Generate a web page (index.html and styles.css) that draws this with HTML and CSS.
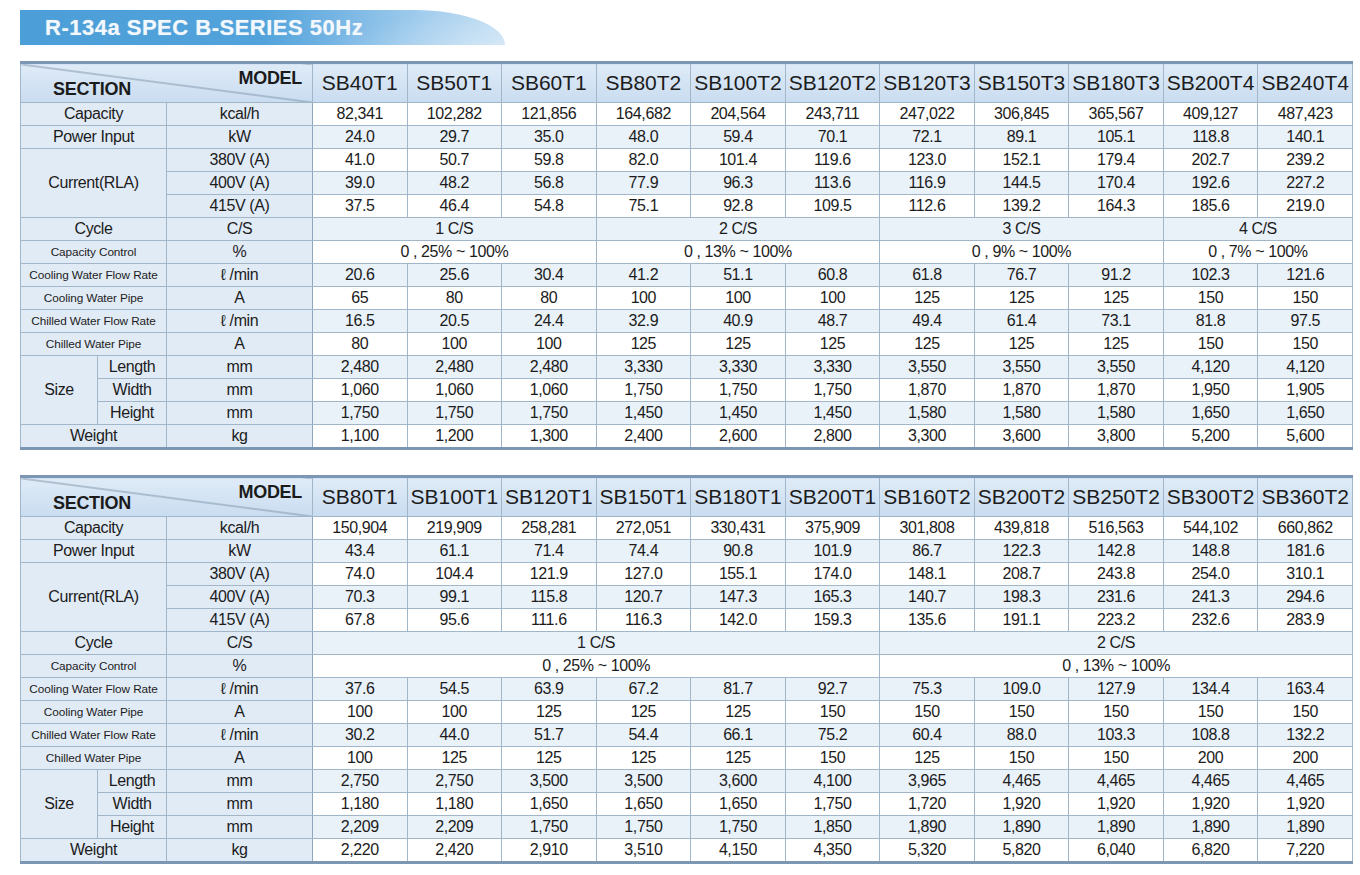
FILE: index.html
```html
<!DOCTYPE html>
<html lang="en">
<head>
<meta charset="utf-8">
<title>R-134a SPEC B-SERIES 50Hz</title>
<link rel="stylesheet" href="styles.css">
</head>
<body>
<div class="banner"><span class="banner-text">R-134a SPEC B-SERIES 50Hz</span></div>

<table class="spec">
  <colgroup><col class="c-a"><col class="c-b"><col class="c-unit"><col span="11" class="c-m"></colgroup>
  <thead>
    <tr>
      <th colspan="3" class="corner"><div class="corner-in"><span class="sec">SECTION</span><span class="mod">MODEL</span></div></th>
      <th>SB40T1</th><th>SB50T1</th><th>SB60T1</th><th>SB80T2</th><th>SB100T2</th><th>SB120T2</th><th>SB120T3</th><th>SB150T3</th><th>SB180T3</th><th>SB200T4</th><th>SB240T4</th>
    </tr>
  </thead>
  <tbody>
    <tr><th colspan="2">Capacity</th><td class="u">kcal/h</td><td>82,341</td><td>102,282</td><td>121,856</td><td>164,682</td><td>204,564</td><td>243,711</td><td>247,022</td><td>306,845</td><td>365,567</td><td>409,127</td><td>487,423</td></tr>
    <tr class="alt"><th colspan="2">Power Input</th><td class="u">kW</td><td>24.0</td><td>29.7</td><td>35.0</td><td>48.0</td><td>59.4</td><td>70.1</td><td>72.1</td><td>89.1</td><td>105.1</td><td>118.8</td><td>140.1</td></tr>
    <tr><th colspan="2" rowspan="3">Current(RLA)</th><td class="u">380V (A)</td><td>41.0</td><td>50.7</td><td>59.8</td><td>82.0</td><td>101.4</td><td>119.6</td><td>123.0</td><td>152.1</td><td>179.4</td><td>202.7</td><td>239.2</td></tr>
    <tr class="alt"><td class="u">400V (A)</td><td>39.0</td><td>48.2</td><td>56.8</td><td>77.9</td><td>96.3</td><td>113.6</td><td>116.9</td><td>144.5</td><td>170.4</td><td>192.6</td><td>227.2</td></tr>
    <tr><td class="u">415V (A)</td><td>37.5</td><td>46.4</td><td>54.8</td><td>75.1</td><td>92.8</td><td>109.5</td><td>112.6</td><td>139.2</td><td>164.3</td><td>185.6</td><td>219.0</td></tr>
    <tr class="alt"><th colspan="2">Cycle</th><td class="u">C/S</td><td colspan="3">1 C/S</td><td colspan="3">2 C/S</td><td colspan="3">3 C/S</td><td colspan="2">4 C/S</td></tr>
    <tr><th colspan="2" class="sm">Capacity Control</th><td class="u">%</td><td colspan="3">0 , 25% ~ 100%</td><td colspan="3">0 , 13% ~ 100%</td><td colspan="3">0 , 9% ~ 100%</td><td colspan="2">0 , 7% ~ 100%</td></tr>
    <tr class="alt"><th colspan="2" class="sm">Cooling Water Flow Rate</th><td class="u">ℓ /min</td><td>20.6</td><td>25.6</td><td>30.4</td><td>41.2</td><td>51.1</td><td>60.8</td><td>61.8</td><td>76.7</td><td>91.2</td><td>102.3</td><td>121.6</td></tr>
    <tr><th colspan="2" class="sm">Cooling Water Pipe</th><td class="u">A</td><td>65</td><td>80</td><td>80</td><td>100</td><td>100</td><td>100</td><td>125</td><td>125</td><td>125</td><td>150</td><td>150</td></tr>
    <tr class="alt"><th colspan="2" class="sm">Chilled Water Flow Rate</th><td class="u">ℓ /min</td><td>16.5</td><td>20.5</td><td>24.4</td><td>32.9</td><td>40.9</td><td>48.7</td><td>49.4</td><td>61.4</td><td>73.1</td><td>81.8</td><td>97.5</td></tr>
    <tr><th colspan="2" class="sm">Chilled Water Pipe</th><td class="u">A</td><td>80</td><td>100</td><td>100</td><td>125</td><td>125</td><td>125</td><td>125</td><td>125</td><td>125</td><td>150</td><td>150</td></tr>
    <tr class="alt"><th rowspan="3">Size</th><th>Length</th><td class="u">mm</td><td>2,480</td><td>2,480</td><td>2,480</td><td>3,330</td><td>3,330</td><td>3,330</td><td>3,550</td><td>3,550</td><td>3,550</td><td>4,120</td><td>4,120</td></tr>
    <tr><th>Width</th><td class="u">mm</td><td>1,060</td><td>1,060</td><td>1,060</td><td>1,750</td><td>1,750</td><td>1,750</td><td>1,870</td><td>1,870</td><td>1,870</td><td>1,950</td><td>1,905</td></tr>
    <tr class="alt"><th>Height</th><td class="u">mm</td><td>1,750</td><td>1,750</td><td>1,750</td><td>1,450</td><td>1,450</td><td>1,450</td><td>1,580</td><td>1,580</td><td>1,580</td><td>1,650</td><td>1,650</td></tr>
    <tr><th colspan="2">Weight</th><td class="u">kg</td><td>1,100</td><td>1,200</td><td>1,300</td><td>2,400</td><td>2,600</td><td>2,800</td><td>3,300</td><td>3,600</td><td>3,800</td><td>5,200</td><td>5,600</td></tr>
  </tbody>
</table>

<table class="spec spec-second">
  <colgroup><col class="c-a"><col class="c-b"><col class="c-unit"><col span="11" class="c-m"></colgroup>
  <thead>
    <tr>
      <th colspan="3" class="corner"><div class="corner-in"><span class="sec">SECTION</span><span class="mod">MODEL</span></div></th>
      <th>SB80T1</th><th>SB100T1</th><th>SB120T1</th><th>SB150T1</th><th>SB180T1</th><th>SB200T1</th><th>SB160T2</th><th>SB200T2</th><th>SB250T2</th><th>SB300T2</th><th>SB360T2</th>
    </tr>
  </thead>
  <tbody>
    <tr><th colspan="2">Capacity</th><td class="u">kcal/h</td><td>150,904</td><td>219,909</td><td>258,281</td><td>272,051</td><td>330,431</td><td>375,909</td><td>301,808</td><td>439,818</td><td>516,563</td><td>544,102</td><td>660,862</td></tr>
    <tr class="alt"><th colspan="2">Power Input</th><td class="u">kW</td><td>43.4</td><td>61.1</td><td>71.4</td><td>74.4</td><td>90.8</td><td>101.9</td><td>86.7</td><td>122.3</td><td>142.8</td><td>148.8</td><td>181.6</td></tr>
    <tr><th colspan="2" rowspan="3">Current(RLA)</th><td class="u">380V (A)</td><td>74.0</td><td>104.4</td><td>121.9</td><td>127.0</td><td>155.1</td><td>174.0</td><td>148.1</td><td>208.7</td><td>243.8</td><td>254.0</td><td>310.1</td></tr>
    <tr class="alt"><td class="u">400V (A)</td><td>70.3</td><td>99.1</td><td>115.8</td><td>120.7</td><td>147.3</td><td>165.3</td><td>140.7</td><td>198.3</td><td>231.6</td><td>241.3</td><td>294.6</td></tr>
    <tr><td class="u">415V (A)</td><td>67.8</td><td>95.6</td><td>111.6</td><td>116.3</td><td>142.0</td><td>159.3</td><td>135.6</td><td>191.1</td><td>223.2</td><td>232.6</td><td>283.9</td></tr>
    <tr class="alt"><th colspan="2">Cycle</th><td class="u">C/S</td><td colspan="6">1 C/S</td><td colspan="5">2 C/S</td></tr>
    <tr><th colspan="2" class="sm">Capacity Control</th><td class="u">%</td><td colspan="6">0 , 25% ~ 100%</td><td colspan="5">0 , 13% ~ 100%</td></tr>
    <tr class="alt"><th colspan="2" class="sm">Cooling Water Flow Rate</th><td class="u">ℓ /min</td><td>37.6</td><td>54.5</td><td>63.9</td><td>67.2</td><td>81.7</td><td>92.7</td><td>75.3</td><td>109.0</td><td>127.9</td><td>134.4</td><td>163.4</td></tr>
    <tr><th colspan="2" class="sm">Cooling Water Pipe</th><td class="u">A</td><td>100</td><td>100</td><td>125</td><td>125</td><td>125</td><td>150</td><td>150</td><td>150</td><td>150</td><td>150</td><td>150</td></tr>
    <tr class="alt"><th colspan="2" class="sm">Chilled Water Flow Rate</th><td class="u">ℓ /min</td><td>30.2</td><td>44.0</td><td>51.7</td><td>54.4</td><td>66.1</td><td>75.2</td><td>60.4</td><td>88.0</td><td>103.3</td><td>108.8</td><td>132.2</td></tr>
    <tr><th colspan="2" class="sm">Chilled Water Pipe</th><td class="u">A</td><td>100</td><td>125</td><td>125</td><td>125</td><td>125</td><td>150</td><td>125</td><td>150</td><td>150</td><td>200</td><td>200</td></tr>
    <tr class="alt"><th rowspan="3">Size</th><th>Length</th><td class="u">mm</td><td>2,750</td><td>2,750</td><td>3,500</td><td>3,500</td><td>3,600</td><td>4,100</td><td>3,965</td><td>4,465</td><td>4,465</td><td>4,465</td><td>4,465</td></tr>
    <tr><th>Width</th><td class="u">mm</td><td>1,180</td><td>1,180</td><td>1,650</td><td>1,650</td><td>1,650</td><td>1,750</td><td>1,720</td><td>1,920</td><td>1,920</td><td>1,920</td><td>1,920</td></tr>
    <tr class="alt"><th>Height</th><td class="u">mm</td><td>2,209</td><td>2,209</td><td>1,750</td><td>1,750</td><td>1,750</td><td>1,850</td><td>1,890</td><td>1,890</td><td>1,890</td><td>1,890</td><td>1,890</td></tr>
    <tr><th colspan="2">Weight</th><td class="u">kg</td><td>2,220</td><td>2,420</td><td>2,910</td><td>3,510</td><td>4,150</td><td>4,350</td><td>5,320</td><td>5,820</td><td>6,040</td><td>6,820</td><td>7,220</td></tr>
  </tbody>
</table>
</body>
</html>
```

FILE: styles.css
```css
html, body {
  margin: 0;
  background: #ffffff;
}

body {
  padding: 10px 0 0 20px;
  font-family: "Liberation Sans", Arial, sans-serif;
  color: #1c1c1c;
}

.banner {
  width: 485px;
  height: 35px;
  box-sizing: border-box;
  padding-left: 25px;
  display: flex;
  align-items: center;
  background:
    radial-gradient(ellipse 260px 60px at 100% 120%, rgba(255,255,255,0.35) 0%, rgba(255,255,255,0) 70%),
    linear-gradient(90deg, #4c9ed8 0%, #52a3db 50%, #78b6e4 66%, #a6cfee 85%, #c3def3 100%);
  border-top-right-radius: 90px 35px;
}

.banner-text {
  font-size: 22px;
  font-weight: bold;
  color: #f3f8fc;
  letter-spacing: 0.5px;
  text-shadow: 0 0 1px rgba(255,255,255,0.5);
}

.spec {
  margin-top: 16px;
  width: 1333px;
  border-collapse: collapse;
  table-layout: fixed;
  border-top: 3px solid #7b97b4;
  border-bottom: 3px solid #7b97b4;
}

.spec-second {
  margin-top: 25px;
}

.c-a { width: 77px; }
.c-b { width: 69px; }
.c-unit { width: 146px; }

.spec th,
.spec td {
  border: 1px solid #a2b6ca;
  padding: 0;
  height: 22px;
  line-height: 20px;
  text-align: center;
  font-size: 16px;
  font-weight: normal;
  letter-spacing: -0.4px;
  white-space: nowrap;
  overflow: hidden;
}

.spec thead th {
  height: 38px;
  font-size: 21px;
  letter-spacing: 0;
  background: linear-gradient(#dfebf7, #c9dcf0);
}

.spec thead th.corner {
  background:
    linear-gradient(to top right, rgba(0,0,0,0) calc(50% - 1px), #8196ab 50%, rgba(0,0,0,0) calc(50% + 1px)),
    linear-gradient(#dfebf7, #c9dcf0);
}

.corner-in {
  height: 38px;
  display: flex;
  justify-content: space-between;
  padding: 0 10px 0 32px;
}

.sec,
.mod {
  font-size: 18px;
  font-weight: bold;
  letter-spacing: -0.3px;
  color: #1b1b1b;
}

.sec {
  align-self: flex-end;
  line-height: 20px;
  padding-bottom: 3px;
}

.mod {
  align-self: flex-start;
  line-height: 20px;
  padding-top: 4px;
}

.spec tbody th {
  background: #e1ebf6;
}

.spec tbody th.sm {
  font-size: 11.8px;
  letter-spacing: -0.1px;
}

.spec td.u {
  background: #e1ebf6;
  border-right-color: #8fa6bd;
}

.spec tr.alt td {
  background: #e9f1f9;
}

.spec tr.alt td.u {
  background: #e1ebf6;
}
```
